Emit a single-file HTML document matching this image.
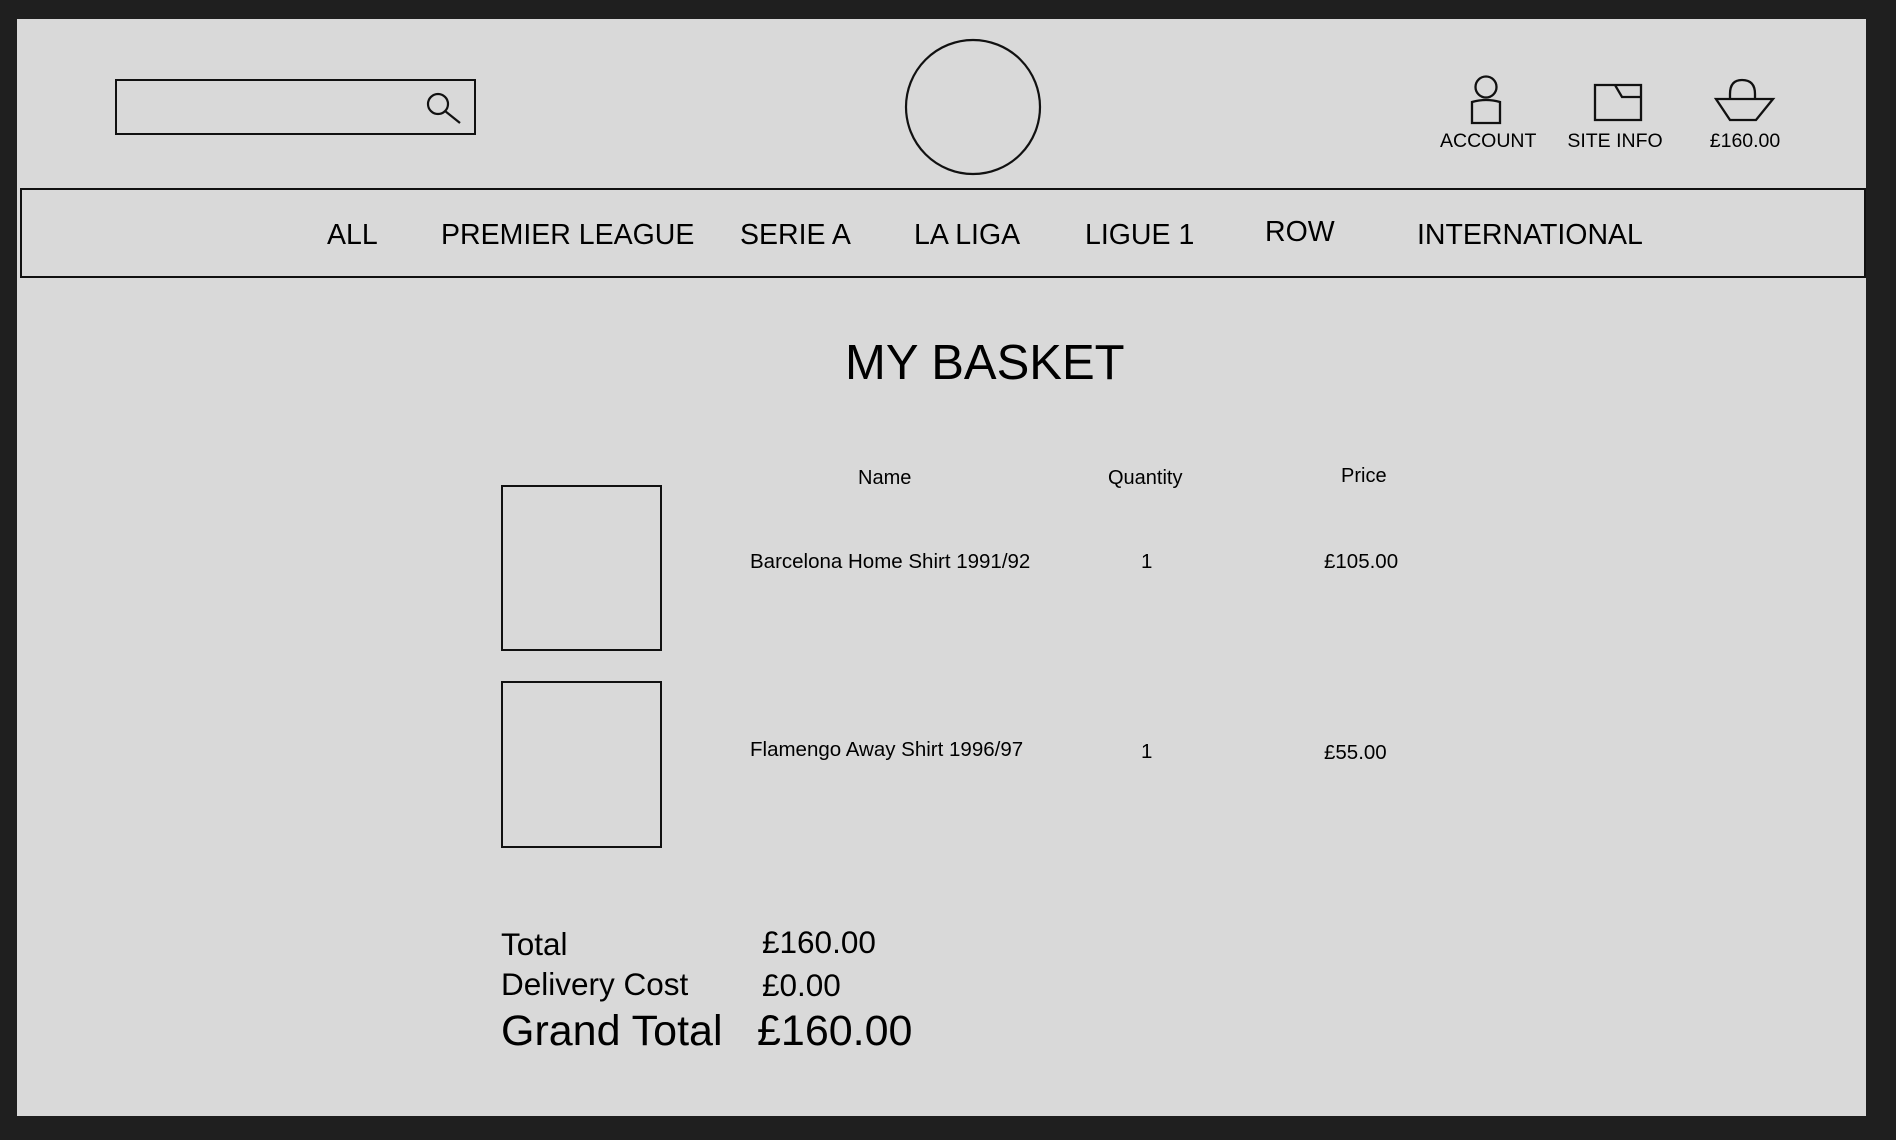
<!DOCTYPE html>
<html><head><meta charset="utf-8"><style>
html,body{margin:0;padding:0}
body{width:1896px;height:1140px;background:#1f1f1f;position:relative;overflow:hidden;font-family:"Liberation Sans",sans-serif;color:#000}
#p{position:absolute;left:17px;top:19px;width:1849px;height:1097px;background:#d9d9d9}
.t{position:absolute;line-height:1;white-space:nowrap}
.b{position:absolute;border:2.5px solid #111;box-sizing:border-box}
</style></head><body>
<div id="p"></div>
<div class="b" style="left:115px;top:79px;width:361px;height:56px"></div>
<svg style="position:absolute;left:425px;top:90px" width="40" height="36" viewBox="0 0 40 36"><circle cx="13" cy="14" r="10" fill="none" stroke="#111" stroke-width="2.2"/><line x1="20" y1="21" x2="35" y2="33" stroke="#111" stroke-width="2.2"/></svg>
<svg style="position:absolute;left:904px;top:38px" width="138" height="138"><circle cx="69" cy="69" r="67" fill="none" stroke="#111" stroke-width="2.2"/></svg>
<svg style="position:absolute;left:1460px;top:70px" width="330" height="60" viewBox="0 0 330 60">
<g fill="none" stroke="#111" stroke-width="2.3">
<circle cx="26" cy="17" r="10.5"/>
<path d="M12 32 Q26 28 40 32 L40 53 L12 53 Z"/>
<path d="M135 15 L155 15 L162 27 L181 27 L181 50 L135 50 Z M181 27 L181 15 L155 15"/>
<path d="M270 29 L270 24 Q270 10 282 10 Q295 10 295 24 L295 29 M256 29 L313 29 L296 50 L270 50 Z"/>
</g></svg>
<div class="t" style="left:1440px;top:132px;width:96px;text-align:center;font-size:19.5px">ACCOUNT</div>
<div class="t" style="left:1560px;top:132px;width:110px;text-align:center;font-size:19.5px">SITE INFO</div>
<div class="t" style="left:1695px;top:132px;width:100px;text-align:center;font-size:19.5px">£160.00</div>
<div class="b" style="left:20px;top:188px;width:1846px;height:90px"></div>
<div class="t" style="left:327px;top:221px;font-size:28.5px">ALL</div>
<div class="t" style="left:441px;top:221px;font-size:28.5px">PREMIER LEAGUE</div>
<div class="t" style="left:740px;top:221px;font-size:28.5px">SERIE A</div>
<div class="t" style="left:914px;top:221px;font-size:28.5px">LA LIGA</div>
<div class="t" style="left:1085px;top:221px;font-size:28.5px">LIGUE 1</div>
<div class="t" style="left:1265px;top:218px;font-size:28.5px">ROW</div>
<div class="t" style="left:1417px;top:221px;font-size:28.5px">INTERNATIONAL</div>
<div class="t" style="left:845px;top:339px;font-size:49px">MY BASKET</div>
<div class="t" style="left:858px;top:468px;font-size:20px">Name</div>
<div class="t" style="left:1108px;top:468px;font-size:20px">Quantity</div>
<div class="t" style="left:1341px;top:466px;font-size:20px">Price</div>
<div class="b" style="left:501px;top:485px;width:161px;height:166px"></div>
<div class="b" style="left:501px;top:681px;width:161px;height:167px"></div>
<div class="t" style="left:750px;top:552px;font-size:20.5px">Barcelona Home Shirt 1991/92</div>
<div class="t" style="left:1141px;top:552px;font-size:20.5px">1</div>
<div class="t" style="left:1324px;top:552px;font-size:20.5px">£105.00</div>
<div class="t" style="left:750px;top:740px;font-size:20.5px">Flamengo Away Shirt 1996/97</div>
<div class="t" style="left:1141px;top:742px;font-size:20.5px">1</div>
<div class="t" style="left:1324px;top:743px;font-size:20.5px">£55.00</div>
<div class="t" style="left:501px;top:929px;font-size:31.5px">Total</div>
<div class="t" style="left:762px;top:927px;font-size:31.5px">£160.00</div>
<div class="t" style="left:501px;top:969px;font-size:31.5px">Delivery Cost</div>
<div class="t" style="left:762px;top:970px;font-size:31.5px">£0.00</div>
<div class="t" style="left:501px;top:1010px;font-size:43px">Grand Total</div>
<div class="t" style="left:757px;top:1010px;font-size:43px">£160.00</div>
</body></html>
